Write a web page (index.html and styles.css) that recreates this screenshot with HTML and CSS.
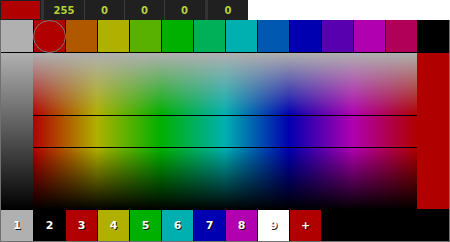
FILE: index.html
```html
<!DOCTYPE html>
<html>
<head>
<meta charset="utf-8">
<link rel="stylesheet" href="styles.css">
</head>
<body>
<div class="top">
  <div class="cur"></div>
  <div class="gap"></div>
  <div class="field">255</div>
  <div class="field sep">0</div>
  <div class="field sep">0</div>
  <div class="field sep">0</div>
  <div class="gap"></div>
  <div class="field last">0</div>
</div>
<div class="panel">
  <div class="swatches">
    <div class="sw" style="background:#b0b0b0"></div>
    <div class="sw" style="background:#b00000"></div>
    <div class="sw" style="background:#b05800"></div>
    <div class="sw" style="background:#b0b000"></div>
    <div class="sw" style="background:#58b000"></div>
    <div class="sw" style="background:#00b000"></div>
    <div class="sw" style="background:#00b058"></div>
    <div class="sw" style="background:#00b0b0"></div>
    <div class="sw" style="background:#0058b0"></div>
    <div class="sw" style="background:#0000b0"></div>
    <div class="sw" style="background:#5800b0"></div>
    <div class="sw" style="background:#b000b0"></div>
    <div class="sw" style="background:#b00058"></div>
    <div class="sw" style="background:#000000"></div>
    <div class="ring"></div>
  </div>
  <div class="main">
    <div class="strip"></div>
    <div class="spectrum">
      <div class="zone tint"></div>
      <div class="line"></div>
      <div class="zone band"></div>
      <div class="line"></div>
      <div class="zone shade"></div>
    </div>
    <div class="side"><div class="chosen"></div></div>
  </div>
  <div class="slots">
    <div class="slot" style="background:#b0b0b0">1</div>
    <div class="slot" style="background:#000000">2</div>
    <div class="slot" style="background:#b00000">3</div>
    <div class="slot" style="background:#b0b000">4</div>
    <div class="slot" style="background:#00b000">5</div>
    <div class="slot" style="background:#00b0b0">6</div>
    <div class="slot" style="background:#0000b0">7</div>
    <div class="slot" style="background:#b000b0">8</div>
    <div class="slot" style="background:#ffffff">9</div>
    <div class="slot" style="background:#b00000">+</div>
  </div>
</div>
</body>
</html>
```
FILE: styles.css
```css
* { box-sizing: border-box; }
html, body { margin: 0; padding: 0; }
body {
  width: 450px;
  height: 242px;
  background: #ffffff;
  overflow: hidden;
  font-family: "DejaVu Sans", Verdana, sans-serif;
}
.top {
  display: flex;
  width: 248px;
  height: 20px;
  background: #1e1e1e;
}
.cur {
  width: 39px;
  height: 18px;
  margin: 1px 0 1px 1px;
  background: #b00000;
}
.gap {
  width: 4px;
  height: 20px;
  background: #333333;
  border-left: 1px solid #1e1e1e;
}
.field {
  width: 40px;
  height: 20px;
  background: #202020;
  color: #b4d238;
  font-size: 10px;
  font-weight: bold;
  display: flex;
  align-items: center;
  justify-content: center;
}
.field.sep { border-left: 1px solid #3a3a3a; }
.field.last { width: 40px; }
.panel {
  width: 450px;
  height: 222px;
  background: #000;
  border-left: 1px solid #707070;
  border-right: 1px solid #707070;
  border-bottom: 1px solid #707070;
  display: flex;
  flex-direction: column;
}
.swatches {
  position: relative;
  display: flex;
  height: 33px;
  border-bottom: 1px solid #000;
}
.sw {
  width: 32px;
  height: 32px;
  border-left: 1px solid #000;
}
.sw:first-child { border-left: none; }
.ring {
  position: absolute;
  left: 32px;
  top: 0;
  width: 33px;
  height: 33px;
  border-radius: 50%;
  border: 1px solid #7a7a7a;
  background: #b00000;
}
.main {
  display: flex;
  height: 157px;
}
.strip {
  width: 32px;
  height: 157px;
  background: linear-gradient(to bottom, #b0b0b0, #000000);
}
.spectrum {
  width: 384px;
  display: flex;
  flex-direction: column;
  background: linear-gradient(to right, #b00000, #b0b000, #00b000, #00b0b0, #0000b0, #b000b0, #b00000);
}
.zone.tint {
  height: 62px;
  background: linear-gradient(to bottom, #b0b0b0, rgba(176,176,176,0));
}
.zone.band { height: 31px; }
.zone.shade {
  height: 62px;
  background: linear-gradient(to bottom, rgba(0,0,0,0), #000000);
}
.line { height: 1px; background: #000; }
.side {
  width: 32px;
  background: #000;
}
.chosen {
  height: 156px;
  background: #b00000;
}
.slots {
  display: flex;
  height: 31px;
}
.slot {
  width: 32px;
  height: 31px;
  border-left: 1px solid #000;
  color: #ffffff;
  font-size: 11px;
  font-weight: bold;
  display: flex;
  align-items: center;
  justify-content: center;
  text-shadow: 1px 1px 0 rgba(0,0,0,0.85);
}
.slot:first-child { border-left: none; }
```
